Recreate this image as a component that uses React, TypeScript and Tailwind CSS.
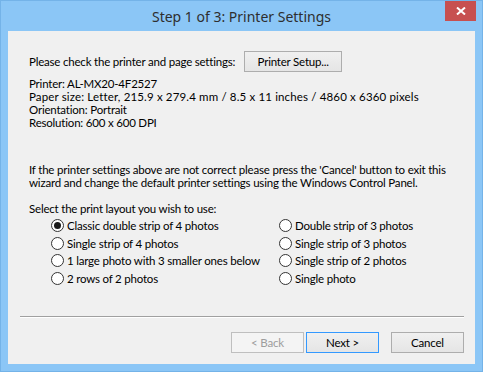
import React, { useState } from 'react';

const layouts: string[][] = [
  ['Classic double strip of 4 photos', 'Double strip of 3 photos'],
  ['Single strip of 4 photos', 'Single strip of 3 photos'],
  ['1 large photo with 3 smaller ones below', 'Single strip of 2 photos'],
  ['2 rows of 2 photos', 'Single photo'],
];

const Radio: React.FC<{ label: string; checked: boolean; onSelect: () => void }> = ({ label, checked, onSelect }) => (
  <button type="button" onClick={onSelect} className="flex items-center h-[17.6px] text-left whitespace-nowrap">
    <span className="w-[13px] h-[13px] rounded-full border border-[#333] bg-white flex items-center justify-center mr-[3px] shrink-0">
      {checked && <span className="w-[7px] h-[7px] rounded-full bg-[#1a1a1a]" />}
    </span>
    <span>{label}</span>
  </button>
);

const Btn: React.FC<{ children: React.ReactNode; className?: string; disabled?: boolean; primary?: boolean }> = ({
  children,
  className = '',
  disabled,
  primary,
}) => (
  <button
    type="button"
    disabled={disabled}
    className={`h-[21px] border flex items-center justify-center whitespace-nowrap ${
      disabled
        ? 'border-[#bfbfbf] bg-[#f4f4f4] text-[#9d9d9d]'
        : primary
        ? 'border-[#3399ff] bg-gradient-to-b from-[#f0f0f0] to-[#e5e5e5] text-black'
        : 'border-[#adadad] bg-gradient-to-b from-[#f0f0f0] to-[#e5e5e5] text-black'
    } ${className}`}
  >
    {children}
  </button>
);

const App: React.FC = () => {
  const [selected, setSelected] = useState('Classic double strip of 4 photos');

  return (
    <div
      className="w-[483px] h-[372px] bg-[#8bc6f6] border border-[#74b3e8] flex flex-col text-[11.5px] leading-[13px] tracking-[-0.2px] text-black whitespace-nowrap"
      style={{ fontFamily: 'Lato, "Noto Sans", sans-serif' }}
    >
      <div className="relative h-[30px] flex items-center justify-center">
        <span className="text-[14px] tracking-normal text-[#2e2e2e] pt-[1px]" style={{ fontFamily: '"Noto Sans", sans-serif' }}>
          Step 1 of 3: Printer Settings
        </span>
        <button type="button" className="absolute right-[6px] top-0 w-[31px] h-[20px] bg-[#c75050] flex items-center justify-center">
          <svg width="10" height="8" viewBox="0 0 10 8">
            <path d="M1 0.5 L9 7.5 M9 0.5 L1 7.5" stroke="white" strokeWidth="2" />
          </svg>
        </button>
      </div>
      <div className="mx-[7px] h-[333px] bg-[#f0f0f0] flex flex-col pl-[21px] pr-[11px]">
        <div className="flex items-center mt-[20px] h-[21px]">
          <span>Please check the printer and page settings:</span>
          <Btn className="ml-[9px] w-[98px]">Printer Setup...</Btn>
        </div>
        <div className="mt-[5px] flex flex-col">
          <span>Printer: AL-MX20-4F2527</span>
          <span className="tracking-[0.15px]">Paper size: Letter, 215.9 x 279.4 mm / 8.5 x 11 inches / 4860 x 6360 pixels</span>
          <span>Orientation: Portrait</span>
          <span>Resolution: 600 x 600 DPI</span>
        </div>
        <div className="mt-[34px] flex flex-col">
          <span>If the printer settings above are not correct please press the 'Cancel' button to exit this</span>
          <span>wizard and change the default printer settings using the Windows Control Panel.</span>
        </div>
        <div className="mt-[13px]">Select the print layout you wish to use:</div>
        <div className="mt-[2px] grid grid-cols-[228px_1fr] pl-[22px]">
          {layouts.map((row) =>
            row.map((label) => (
              <Radio key={label} label={label} checked={selected === label} onSelect={() => setSelected(label)} />
            ))
          )}
        </div>
        <div className="mt-auto border-t border-[#a0a0a0] border-b border-b-white -ml-[9px]" />
        <div className="flex items-center justify-end mt-[14px] mb-[11px]">
          <Btn disabled className="w-[73px]">&lt; Back</Btn>
          <Btn primary className="w-[73px] ml-[2px]">Next &gt;</Btn>
          <Btn className="w-[73px] ml-[12px]">Cancel</Btn>
        </div>
      </div>
    </div>
  );
};

export default App;
